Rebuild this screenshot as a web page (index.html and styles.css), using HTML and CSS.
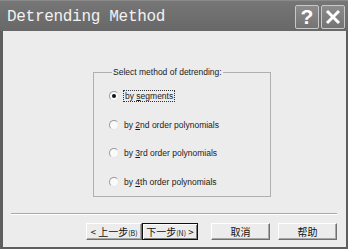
FILE: index.html
```html
<!DOCTYPE html>
<html lang="en">
<head>
    <meta charset="UTF-8">
    <meta name="viewport" content="width=device-width, initial-scale=1.0">
    <title>Detrending Method</title>
    <link rel="stylesheet" href="styles.css">
</head>
<body>
    <div class="window">
        <div class="titlebar">
            <span class="title">Detrending Method</span>
            <div class="caption-buttons">
                <span class="cap-btn">?</span>
                <span class="cap-btn">
                    <svg width="16" height="16" viewBox="0 0 16 16">
                        <path d="M2 2 L14 14 M14 2 L2 14" stroke="#fff" stroke-width="3" fill="none"/>
                    </svg>
                </span>
            </div>
        </div>

        <div class="client">
            <fieldset class="group">
                <legend>Select method of detrending:</legend>

                <label class="option">
                    <span class="radio checked"></span>
                    <span class="focus">by <u>s</u>egments</span>
                </label>
                <label class="option">
                    <span class="radio"></span>
                    <span>by <u>2</u>nd order polynomials</span>
                </label>
                <label class="option">
                    <span class="radio"></span>
                    <span>by <u>3</u>rd order polynomials</span>
                </label>
                <label class="option">
                    <span class="radio"></span>
                    <span>by <u>4</u>th order polynomials</span>
                </label>
            </fieldset>

            <div class="footer">
                <div class="separator"></div>
                <div class="buttons">
                    <button class="btn back">&lt;&nbsp;上一步<small>(B)</small></button>
                    <button class="btn next">下一步<small>(N)</small>&nbsp;&gt;</button>
                    <button class="btn wide">取消</button>
                    <button class="btn wide">帮助</button>
                </div>
            </div>
        </div>
    </div>
</body>
</html>
```

FILE: styles.css
```css
body {
    margin: 0;
    font-family: "Liberation Sans", Arial, sans-serif;
    background: #ececec;
}

.window {
    width: 348px;
    height: 249px;
    box-sizing: border-box;
    background: #5e5e5e;
    border-top: 1px solid #8a8a8a;
    padding: 0 2px 2px 3px;
    display: flex;
    flex-direction: column;
}

.titlebar {
    height: 30px;
    display: flex;
    align-items: center;
    justify-content: space-between;
    background: linear-gradient(#767676, #686868);
    margin: 0 -2px 0 -3px;
    padding: 0 3px 0 7px;
}

.title {
    font-family: "Liberation Mono", "DejaVu Sans Mono", monospace;
    font-size: 16px;
    letter-spacing: -0.3px;
    color: #f2f2f2;
    margin-top: 2px;
}

.caption-buttons {
    display: flex;
    gap: 2px;
    margin-top: 2px;
}

.cap-btn {
    width: 22px;
    height: 22px;
    display: flex;
    align-items: center;
    justify-content: center;
    border: 1px solid #c8c8c8;
    border-radius: 2px;
    background: linear-gradient(#8c8c8c, #737373);
    color: #fff;
    font-family: "Liberation Sans", Arial, sans-serif;
    font-weight: bold;
    font-size: 21px;
}

.client {
    flex: 1;
    background: #ececec;
    display: flex;
    flex-direction: column;
}

.group {
    margin: 36px 0 0 90px;
    width: 178px;
    height: 130px;
    box-sizing: border-box;
    border: 1px solid #b0b0b0;
    padding: 11px 0 0 15px;
    display: flex;
    flex-direction: column;
    gap: 12.5px;
}

.group legend {
    font-size: 8.5px;
    color: #202020;
    padding: 0 1px;
    margin-left: 3px;
}

.option {
    display: flex;
    align-items: center;
    height: 16px;
    font-size: 8.5px;
    color: #1a1a1a;
}

.radio {
    width: 8px;
    height: 8px;
    border-radius: 50%;
    border: 1px solid;
    border-color: #9a9a9a #e4e4e4 #e4e4e4 #9a9a9a;
    background: #fafafa;
    margin-right: 5px;
    display: flex;
    align-items: center;
    justify-content: center;
}

.radio.checked::after {
    content: "";
    width: 4px;
    height: 4px;
    border-radius: 50%;
    background: #111;
}

.focus {
    outline: 1px dotted #333;
    padding: 0 1px;
}

.footer {
    margin-top: auto;
    padding: 0 9px 7px 8px;
}

.separator {
    border-top: 1px solid #a8a8a8;
    border-bottom: 1px solid #fff;
    margin-bottom: 8px;
}

.buttons {
    display: flex;
    justify-content: flex-end;
}

.btn {
    height: 17px;
    box-sizing: border-box;
    padding: 0;
    font-family: "Noto Sans CJK SC", sans-serif;
    font-size: 10px;
    line-height: 1;
    color: #111;
    background: #ececec;
    border: 1px solid;
    border-color: #fff #707070 #707070 #fff;
    box-shadow: inset -1px -1px 0 #a8a8a8;
}

.btn small {
    font-size: 7px;
}

.back {
    width: 56px;
}

.next {
    width: 56px;
    border-color: #111;
    box-shadow: inset 1px 1px 0 #fff, inset -1px -1px 0 #808080;
    margin-right: 13px;
}

.wide {
    width: 59px;
}

.wide + .wide {
    margin-left: 8px;
}
```
